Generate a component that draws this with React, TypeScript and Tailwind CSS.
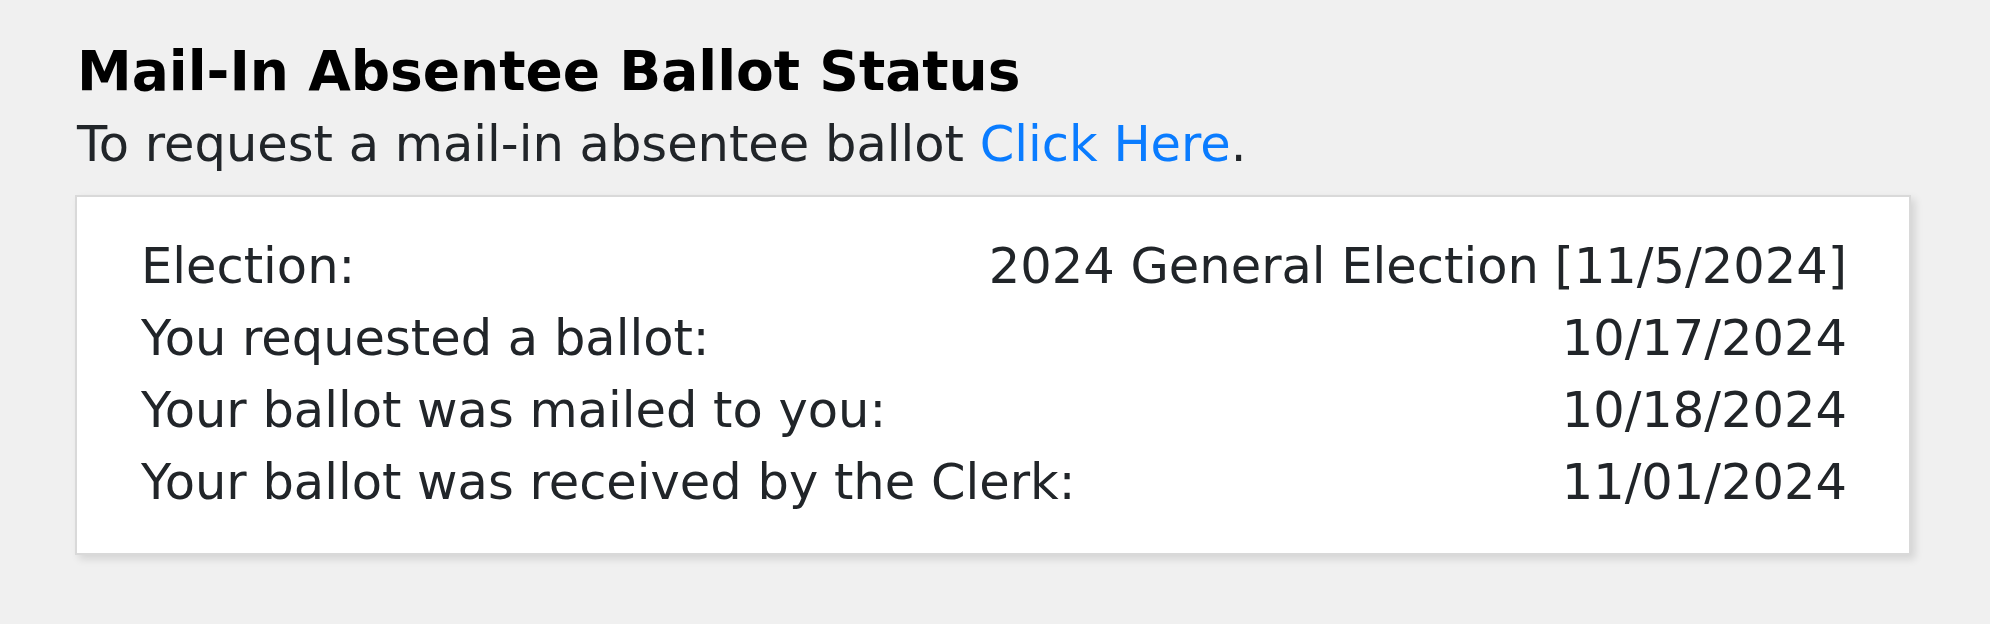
import React from 'react';

const rows = [
  { label: 'Election:', value: '2024 General Election [11/5/2024]' },
  { label: 'You requested a ballot:', value: '10/17/2024' },
  { label: 'Your ballot was mailed to you:', value: '10/18/2024' },
  { label: 'Your ballot was received by the Clerk:', value: '11/01/2024' },
];

export default function App() {
  return (
    <div
      className="min-h-[624px] w-full bg-[#f0f0f0] px-[75px] pt-[39px] text-[#212529]"
      style={{ fontFamily: '"DejaVu Sans", Verdana, sans-serif' }}
    >
      <h1 className="ml-[2px] text-[55px] font-bold leading-[64px] text-black">Mail-In Absentee Ballot Status</h1>
      <p className="ml-[2px] mt-[11px] text-[49.5px] leading-[60px]">
        To request a mail-in absentee ballot{' '}
        <a href="#" className="text-[#0a7cff]">
          Click Here
        </a>
        .
      </p>
      <div className="mt-[21px] w-[1836px] border-2 border-[#d9d9d9] bg-white pl-[64px] pr-[62px] pt-[33px] pb-[35px] shadow-[4px_4px_8px_rgba(0,0,0,0.12)]">
        {rows.map((row) => (
          <div key={row.label} className="flex justify-between text-[49.5px] leading-[72px]">
            <span>{row.label}</span>
            <span>{row.value}</span>
          </div>
        ))}
      </div>
    </div>
  );
}
